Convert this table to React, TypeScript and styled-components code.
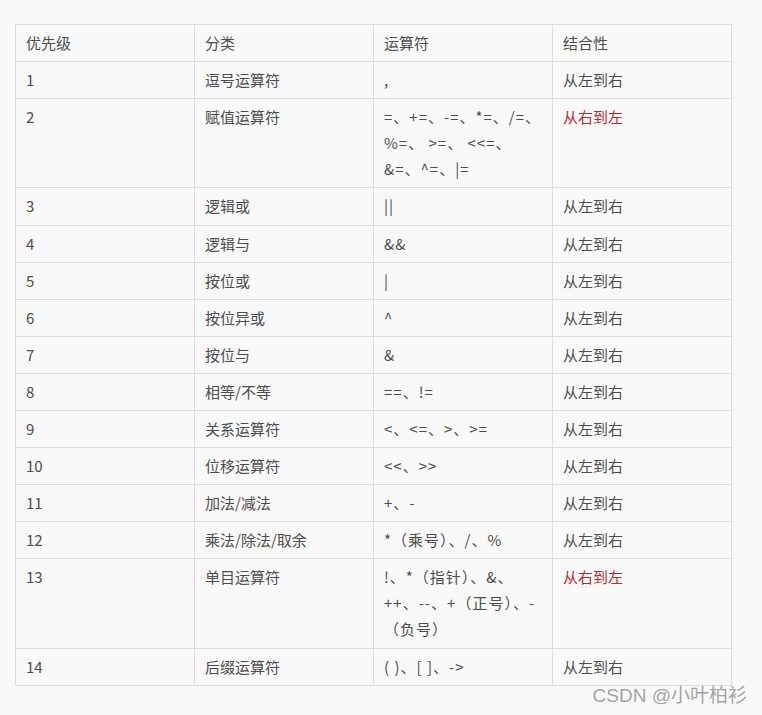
import React from "react";
import styled, { createGlobalStyle } from "styled-components";

const Global = createGlobalStyle`
  html, body {
    margin: 0;
    padding: 0;
    background: #f9f9f9;
  }
  body {
    font-family: "Noto Sans CJK SC", "Noto Sans", sans-serif;
  }
`;

const Page = styled.div`
  position: relative;
  width: 762px;
  height: 715px;
  padding: 24px 0 0 15px;
  box-sizing: border-box;
  overflow: hidden;
`;

const Table = styled.table`
  border-collapse: collapse;
  table-layout: fixed;
  width: 716px;
  color: #4d4d4d;
  font-size: 15px;
  line-height: 26px;
`;

const Tr = styled.tr<{ $h: number }>`
  height: ${(p) => p.$h}px;
`;

const Cell = styled.td<{ $red?: boolean }>`
  border: 1px solid #dddddd;
  padding: 5px 10px;
  vertical-align: top;
  text-align: left;
  font-weight: normal;
  color: ${(p) => (p.$red ? "#c0272d" : "#4d4d4d")};
  white-space: nowrap;
`;

const Head = styled(Cell).attrs({ as: "th" })``;

const Op = styled.span`
  letter-spacing: 1px;
`;

const Watermark = styled.div`
  position: absolute;
  right: 15px;
  bottom: 8px;
  font-family: "Liberation Sans", "Noto Sans CJK SC", sans-serif;
  font-size: 19px;
  line-height: 22px;
  color: #a3a3a3;
  text-shadow: 0 0 1px #ffffff, 0 0 2px #ffffff;
`;

type Row = { lvl: string; cat: string; op: React.ReactNode; dir: string; h?: number };

const rows: Row[] = [
  { lvl: "1", cat: "逗号运算符", op: ",", dir: "从左到右" },
  {
    lvl: "2",
    cat: "赋值运算符",
    op: (
      <>
        =、+=、-=、*=、/=、
        <br />
        %=、 &gt;=、 &lt;&lt;=、
        <br />
        &amp;=、^=、|=
      </>
    ),
    dir: "从右到左",
    h: 89,
  },
  { lvl: "3", cat: "逻辑或", op: "||", dir: "从左到右", h: 38 },
  { lvl: "4", cat: "逻辑与", op: "&&", dir: "从左到右" },
  { lvl: "5", cat: "按位或", op: "|", dir: "从左到右" },
  { lvl: "6", cat: "按位异或", op: "^", dir: "从左到右" },
  { lvl: "7", cat: "按位与", op: "&", dir: "从左到右" },
  { lvl: "8", cat: "相等/不等", op: "==、!=", dir: "从左到右" },
  { lvl: "9", cat: "关系运算符", op: "<、<=、>、>=", dir: "从左到右" },
  { lvl: "10", cat: "位移运算符", op: "<<、>>", dir: "从左到右" },
  { lvl: "11", cat: "加法/减法", op: "+、-", dir: "从左到右" },
  { lvl: "12", cat: "乘法/除法/取余", op: "*（乘号）、/、%", dir: "从左到右" },
  {
    lvl: "13",
    cat: "单目运算符",
    op: (
      <>
        !、*（指针）、&amp;、
        <br />
        ++、--、+（正号）、-
        <br />
        （负号）
      </>
    ),
    dir: "从右到左",
    h: 90,
  },
  { lvl: "14", cat: "后缀运算符", op: "( )、[ ]、->", dir: "从左到右" },
];

export default function App() {
  return (
    <>
      <Global />
      <Page>
        <Table>
          <colgroup>
            <col style={{ width: 179 }} />
            <col style={{ width: 179 }} />
            <col style={{ width: 179 }} />
            <col style={{ width: 179 }} />
          </colgroup>
          <thead>
            <Tr $h={37}>
              <Head>优先级</Head>
              <Head>分类</Head>
              <Head>运算符</Head>
              <Head>结合性</Head>
            </Tr>
          </thead>
          <tbody>
            {rows.map((r) => (
              <Tr key={r.lvl} $h={r.h ?? 37}>
                <Cell>{r.lvl}</Cell>
                <Cell>{r.cat}</Cell>
                <Cell>
                  <Op>{r.op}</Op>
                </Cell>
                <Cell $red={r.dir === "从右到左"}>{r.dir}</Cell>
              </Tr>
            ))}
          </tbody>
        </Table>
        <Watermark>CSDN @小叶柏衫</Watermark>
      </Page>
    </>
  );
}
